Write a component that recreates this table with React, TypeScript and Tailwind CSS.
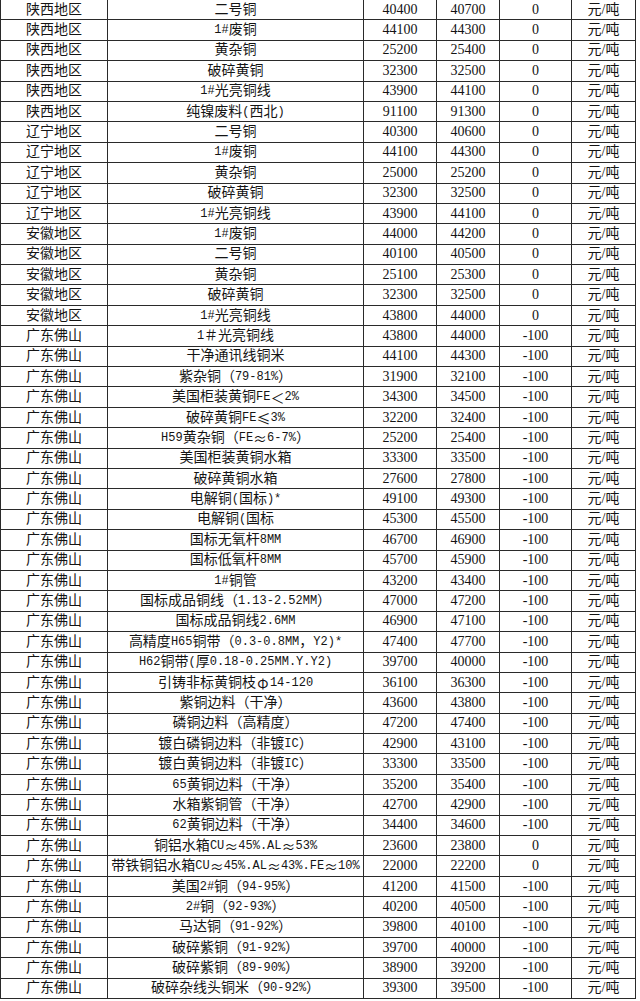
import React from "react";

type Row = [string, string, string, string, string];

const rows: Row[] = [
  ["陕西地区", "二号铜", "40400", "40700", "0"],
  ["陕西地区", "1#废铜", "44100", "44300", "0"],
  ["陕西地区", "黄杂铜", "25200", "25400", "0"],
  ["陕西地区", "破碎黄铜", "32300", "32500", "0"],
  ["陕西地区", "1#光亮铜线", "43900", "44100", "0"],
  ["陕西地区", "纯镍废料(西北)", "91100", "91300", "0"],
  ["辽宁地区", "二号铜", "40300", "40600", "0"],
  ["辽宁地区", "1#废铜", "44100", "44300", "0"],
  ["辽宁地区", "黄杂铜", "25000", "25200", "0"],
  ["辽宁地区", "破碎黄铜", "32300", "32500", "0"],
  ["辽宁地区", "1#光亮铜线", "43900", "44100", "0"],
  ["安徽地区", "1#废铜", "44000", "44200", "0"],
  ["安徽地区", "二号铜", "40100", "40500", "0"],
  ["安徽地区", "黄杂铜", "25100", "25300", "0"],
  ["安徽地区", "破碎黄铜", "32300", "32500", "0"],
  ["安徽地区", "1#光亮铜线", "43800", "44000", "0"],
  ["广东佛山", "1＃光亮铜线", "43800", "44000", "-100"],
  ["广东佛山", "干净通讯线铜米", "44100", "44300", "-100"],
  ["广东佛山", "紫杂铜（79-81%）", "31900", "32100", "-100"],
  ["广东佛山", "美国柜装黄铜FE＜2%", "34300", "34500", "-100"],
  ["广东佛山", "破碎黄铜FE≤3%", "32200", "32400", "-100"],
  ["广东佛山", "H59黄杂铜（FE≈6-7%）", "25200", "25400", "-100"],
  ["广东佛山", "美国柜装黄铜水箱", "33300", "33500", "-100"],
  ["广东佛山", "破碎黄铜水箱", "27600", "27800", "-100"],
  ["广东佛山", "电解铜(国标)*", "49100", "49300", "-100"],
  ["广东佛山", "电解铜(国标", "45300", "45500", "-100"],
  ["广东佛山", "国标无氧杆8MM", "46700", "46900", "-100"],
  ["广东佛山", "国标低氧杆8MM", "45700", "45900", "-100"],
  ["广东佛山", "1#铜管", "43200", "43400", "-100"],
  ["广东佛山", "国标成品铜线（1.13-2.52MM）", "47000", "47200", "-100"],
  ["广东佛山", "国标成品铜线2.6MM", "46900", "47100", "-100"],
  ["广东佛山", "高精度H65铜带（0.3-0.8MM，Y2)*", "47400", "47700", "-100"],
  ["广东佛山", "H62铜带(厚0.18-0.25MM.Y.Y2)", "39700", "40000", "-100"],
  ["广东佛山", "引铸非标黄铜枝Φ14-120", "36100", "36300", "-100"],
  ["广东佛山", "紫铜边料（干净）", "43600", "43800", "-100"],
  ["广东佛山", "磷铜边料（高精度）", "47200", "47400", "-100"],
  ["广东佛山", "镀白磷铜边料（非镀IC）", "42900", "43100", "-100"],
  ["广东佛山", "镀白黄铜边料（非镀IC）", "33300", "33500", "-100"],
  ["广东佛山", "65黄铜边料（干净）", "35200", "35400", "-100"],
  ["广东佛山", "水箱紫铜管（干净）", "42700", "42900", "-100"],
  ["广东佛山", "62黄铜边料（干净）", "34400", "34600", "-100"],
  ["广东佛山", "铜铝水箱CU≈45%.AL≈53%", "23600", "23800", "0"],
  ["广东佛山", "带铁铜铝水箱CU≈45%.AL≈43%.FE≈10%", "22000", "22200", "0"],
  ["广东佛山", "美国2#铜（94-95%）", "41200", "41500", "-100"],
  ["广东佛山", "2#铜（92-93%）", "40200", "40500", "-100"],
  ["广东佛山", "马达铜（91-92%）", "39800", "40100", "-100"],
  ["广东佛山", "破碎紫铜（91-92%）", "39700", "40000", "-100"],
  ["广东佛山", "破碎紫铜（89-90%）", "38900", "39200", "-100"],
  ["广东佛山", "破碎杂线头铜米（90-92%）", "39300", "39500", "-100"],
];

// the old SimSun sheet draws latin half width and these symbols full width
function Mixed({ text }: { text: string }) {
  const parts = text.split(/([≈≤Φ＜]|[\x21-\x7e]+)/).filter((p) => p !== "");
  return (
    <>
      {parts.map((p, i) => {
        if (/^[≈≤Φ＜]$/.test(p))
          return (
            <span
              key={i}
              className="inline-block w-[14px] text-center font-['Noto_Sans_CJK_SC',sans-serif]"
            >
              {p}
            </span>
          );
        if (/^[\x21-\x7e]+$/.test(p))
          return (
            <span
              key={i}
              className="font-['Liberation_Mono',monospace] text-[12px]"
            >
              {p}
            </span>
          );
        return <span key={i}>{p}</span>;
      })}
    </>
  );
}

const cell =
  "h-[20.4px] border-r border-b border-[#2a2a2a] flex items-center justify-center whitespace-nowrap overflow-hidden";

export default function App() {
  return (
    <div className="w-[640px] h-[1001px] bg-white overflow-hidden">
      <div className="grid grid-cols-[108px_256px_73px_63px_72px_64px] w-[636px] text-[14px] leading-[20px] text-[#141414] font-['Liberation_Serif','Noto_Sans_CJK_SC',serif]">
        {rows.map((r, i) => (
          <React.Fragment key={i}>
            <div className={cell + " border-l"}>{r[0]}</div>
            <div className={cell}>
              <Mixed text={r[1]} />
            </div>
            <div className={cell}>{r[2]}</div>
            <div className={cell}>{r[3]}</div>
            <div className={cell}>{r[4]}</div>
            <div className={cell}>元/吨</div>
          </React.Fragment>
        ))}
      </div>
    </div>
  );
}
